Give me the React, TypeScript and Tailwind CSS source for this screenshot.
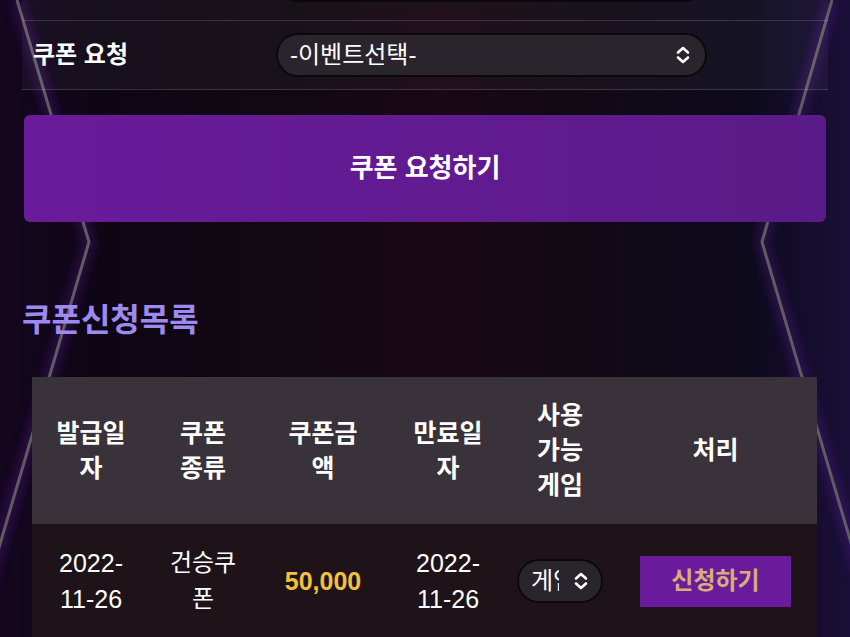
import type { ReactNode } from "react";

const HEAD: { lines: string[]; w: string }[] = [
  { lines: ["발급일", "자"], w: "w-[118px]" },
  { lines: ["쿠폰", "종류"], w: "w-[106px]" },
  { lines: ["쿠폰금", "액"], w: "w-[134px]" },
  { lines: ["만료일", "자"], w: "w-[116px]" },
  { lines: ["사용", "가능", "게임"], w: "w-[108px]" },
  { lines: ["처리"], w: "w-[203px]" },
];

function UpDown({ className }: { className?: string }) {
  return (
    <svg
      viewBox="0 0 16 20"
      className={className}
      fill="none"
      stroke="currentColor"
      strokeWidth={2.6}
      strokeLinecap="round"
      strokeLinejoin="round"
    >
      <path d="M3 7.5 8 3l5 4.5M3 12.5 8 17l5-4.5" />
    </svg>
  );
}

function Lines({ lines }: { lines: string[] }) {
  return (
    <>
      {lines.map((l, i) => (
        <div key={i} className="whitespace-nowrap">
          {l}
        </div>
      ))}
    </>
  );
}

function Row({ label, children, last }: { label?: string; children: ReactNode; last?: boolean }) {
  return (
    <div
      className={`flex items-center border-b border-white/15 ${
        last ? "pt-[12px] pb-[12px]" : "pt-[6px] pb-[18px]"
      }`}
    >
      <div className="w-[254px] pl-[11px] text-[24px] font-bold text-white">{label}</div>
      {children}
    </div>
  );
}

function Select({ text }: { text: string }) {
  return (
    <div className="flex h-[44px] w-[431px] items-center justify-between rounded-full border-2 border-[#0b090c] bg-[#2a252d] pl-[12px] pr-[14px]">
      <span className="text-[24px] leading-[30px] text-white">{text}</span>
      <UpDown className="h-[20px] w-[16px] text-white" />
    </div>
  );
}

export default function App() {
  return (
    <div className="relative h-[637px] w-[850px] overflow-hidden bg-[#0c0611] font-['Liberation_Sans','Noto_Sans_CJK_KR',sans-serif]">
      {/* background glow + neon frame */}
      <div className="absolute inset-0 bg-[linear-gradient(90deg,#14061f_0%,#0e0614_12%,#110812_35%,#1a0814_52%,#120914_66%,#0d0a1c_88%,#1a0f38_100%)]" />
      <svg className="absolute inset-0" width="850" height="637" viewBox="0 0 850 637">
        <defs>
          <filter id="glow" x="-20%" y="-20%" width="140%" height="140%">
            <feGaussianBlur stdDeviation="6" />
          </filter>
        </defs>
        <g filter="url(#glow)" stroke="#6a22b0" strokeWidth="9" fill="none" opacity="0.4">
          <path d="M17 0 L89 242 L-12 585" />
          <path d="M832 0 L762 242 L862 580" />
        </g>
        <g stroke="#5e5d5f" strokeWidth="3" fill="none">
          <path d="M17 0 L89 242 L-12 585" />
          <path d="M832 0 L762 242 L862 580" />
        </g>
      </svg>

      <div className="relative px-[22px]">
        {/* form */}
        <div className="mt-[-48px] bg-white/[0.035]">
          <Row>
            <Select text="" />
          </Row>
          <Row label="쿠폰 요청" last>
            <Select text="-이벤트선택-" />
          </Row>
        </div>

        <button className="mx-[2px] mt-[25px] flex h-[107px] w-[802px] items-center justify-center rounded-[6px] bg-[linear-gradient(90deg,#6a1b9b,#5a1a87)] text-[26px] font-bold text-white">
          쿠폰 요청하기
        </button>

        <h2 className="mt-[80px] text-[32px] font-bold leading-[36px] text-[#9d8af0]">쿠폰신청목록</h2>

        {/* list */}
        <div className="mx-[10px] mt-[39px] w-[785px]">
          <div className="flex bg-[#3a323b] py-[21px] text-[25px] font-bold leading-[35px] text-white">
            {HEAD.map((h, i) => (
              <div key={i} className={`${h.w} flex flex-col items-center justify-center text-center`}>
                <Lines lines={h.lines} />
              </div>
            ))}
          </div>
          <div className="flex h-[114px] items-center bg-[#1e1319] text-[25px] leading-[36px] text-white">
            <div className="flex w-[118px] flex-col items-center">
              <Lines lines={["2022-", "11-26"]} />
            </div>
            <div className="flex w-[106px] flex-col items-center text-[24px]">
              <Lines lines={["건승쿠", "폰"]} />
            </div>
            <div className="flex w-[134px] justify-center font-bold text-[#f2c03c]">50,000</div>
            <div className="flex w-[116px] flex-col items-center">
              <Lines lines={["2022-", "11-26"]} />
            </div>
            <div className="flex w-[108px] justify-center">
              <div className="flex h-[44px] w-[86px] items-center justify-between rounded-full border-2 border-[#0b090c] bg-[#2a252d] pl-[12px] pr-[12px]">
                <span className="w-[28px] overflow-hidden whitespace-nowrap text-[24px]">게임선택</span>
                <UpDown className="h-[20px] w-[16px] text-white" />
              </div>
            </div>
            <div className="flex w-[203px] justify-center">
              <button className="h-[51px] w-[151px] bg-[#6a1b9b] text-[24px] font-bold text-[#d8ad78]">
                신청하기
              </button>
            </div>
          </div>
        </div>
      </div>
    </div>
  );
}
